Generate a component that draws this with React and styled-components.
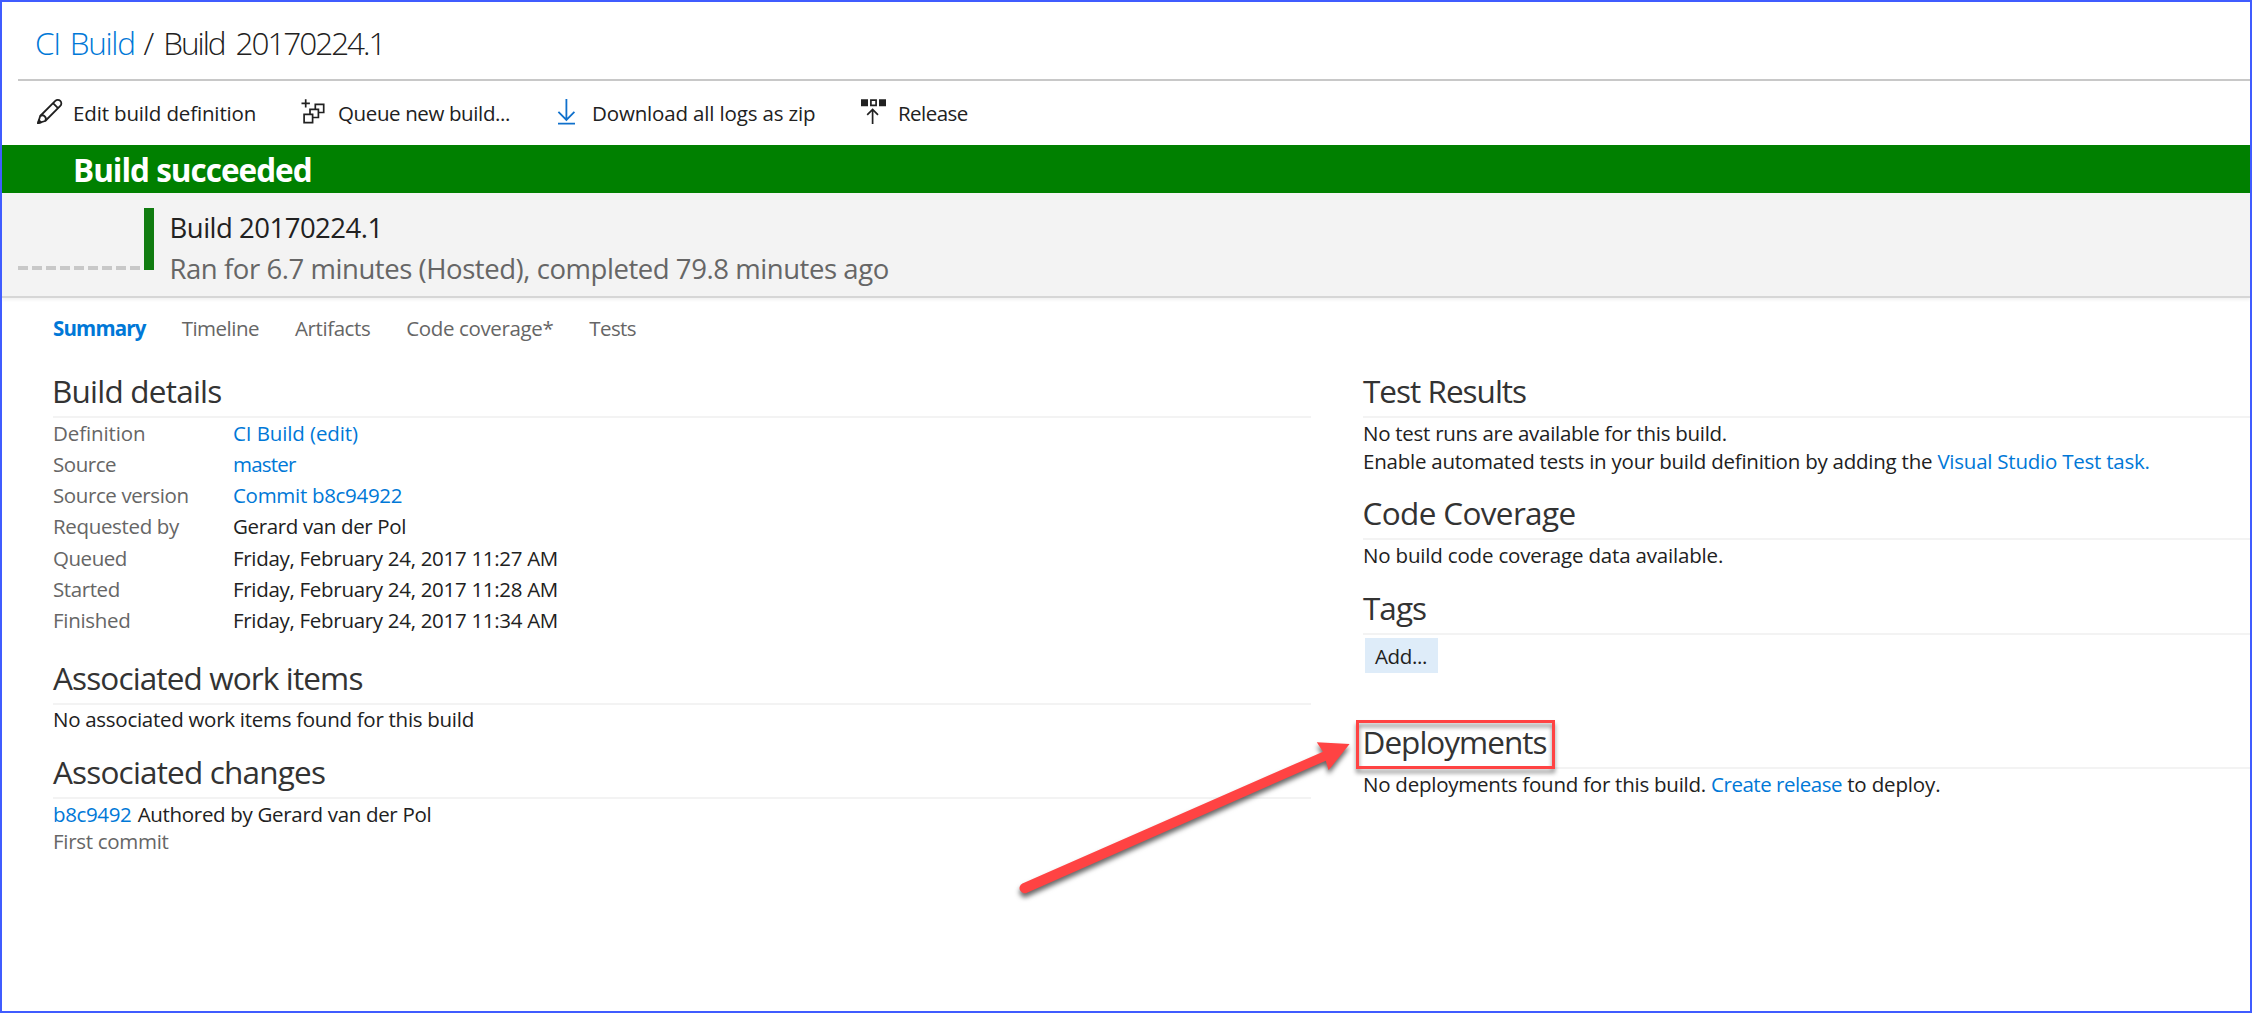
import React from "react";
import styled, { createGlobalStyle } from "styled-components";

const colors = {
  frame: "#405cff",
  link: "#0078d7",
  ink: "#212121",
  heading: "#333333",
  muted: "#666666",
  success: "#008000",
  annotation: "#ff4343",
};

const GlobalStyle = createGlobalStyle`
  * { box-sizing: border-box; }
  body {
    margin: 0;
    background: #fff;
    color: ${colors.ink};
    font-family: "Open Sans", "Noto Sans", sans-serif;
    font-size: 20.5px;
  }
`;

const Page = styled.div`
  position: relative;
  width: 2252px;
  height: 1013px;
  overflow: hidden;
  border: 2px solid ${colors.frame};
  display: flex;
  flex-direction: column;
`;

/* Inline run of text with its own tracking, in px. */
const Text = styled.span`
  letter-spacing: ${(p) => p.$track || 0}px;
  word-spacing: ${(p) => p.$space || 0}px;
  white-space: pre;
`;

const Link = styled(Text).attrs({ as: "a" })`
  color: ${colors.link};
  text-decoration: none;
  cursor: pointer;
`;

const Title = styled.h1`
  display: flex;
  flex: none;
  align-items: center;
  gap: 9px;
  height: 79px;
  margin: 0 0 0 16px;
  padding: 4px 0 0 17px;
  border-bottom: 2px solid #c8c8c8;
  font-size: 31.5px;
  font-weight: 300;
`;

const Toolbar = styled.div`
  display: flex;
  flex: none;
  height: 64px;
  align-items: center;
  padding-left: 34px;
`;

const ToolButton = styled.div`
  display: flex;
  align-items: center;
  width: ${(p) => p.$width}px;
  gap: ${(p) => p.$gap}px;
  line-height: 28px;

  svg {
    flex: none;
    margin-top: -4px;
  }
`;

const Banner = styled.div`
  flex: none;
  height: 48px;
  padding: 1px 0 0 71px;
  background: ${colors.success};
  color: #fff;
  font-size: 31.5px;
  font-weight: 700;
  line-height: 47px;
`;

const RunPanel = styled.div`
  display: flex;
  flex: none;
  height: 105px;
  padding: 14px 0 0 16px;
  background: #f3f3f3;
  border-bottom: 2px solid #d6d6d6;
  box-shadow: 0 2px 3px rgba(0, 0, 0, 0.06);
`;

const History = styled.div`
  display: flex;
  align-items: flex-end;
  width: 136px;
  height: 63px;
`;

const Dashes = styled.div`
  display: flex;
  gap: 4px;
  width: 126px;
`;

const Dash = styled.i`
  width: 10px;
  height: 4px;
  background: #c8c8c8;
`;

const HistoryBar = styled.div`
  width: 10px;
  height: 62px;
  background: #107c10;
`;

const RunInfo = styled.div`
  padding-left: 15.5px;
  font-size: 27.5px;
  line-height: 41px;
`;

const RunStatus = styled.div`
  color: ${colors.muted};
`;

const Tabs = styled.nav`
  display: flex;
  flex: none;
  gap: 36px;
  margin-top: 12px;
  padding-left: 51px;
  line-height: 36px;
  color: ${colors.muted};
`;

const Tab = styled(Text)`
  color: ${(p) => (p.$active ? colors.link : "inherit")};
  font-weight: ${(p) => (p.$active ? 700 : 400)};
`;

const Columns = styled.div`
  display: grid;
  grid-template-columns: 1258px 1fr;
  column-gap: 52px;
  padding: 24px 0 0 51px;
`;

const Section = styled.section`
  margin-bottom: ${(p) => p.$after}px;
`;

const Heading = styled.h2`
  margin: 0;
  height: 48px;
  border-bottom: 2px solid #f3f3f3;
  color: ${colors.heading};
  font-size: 31.5px;
  font-weight: 400;
  line-height: 42px;
`;

const HeadingText = styled(Text)`
  position: relative;
  margin-left: ${(p) => p.$shift || 0}px;
`;

const Body = styled.div`
  padding-top: ${(p) => p.$top || 0}px;
  line-height: 28px;
`;

const Muted = styled.div`
  color: ${colors.muted};
  line-height: 26px;
`;

const Details = styled.dl`
  display: grid;
  grid-template-columns: 180px 1fr;
  margin: -0.5px 0 0;
  line-height: 31.33px;
`;

const Label = styled.dt`
  color: ${colors.muted};
`;

const Value = styled.dd`
  margin: 0;
`;

const AddButton = styled.button`
  display: block;
  width: 73px;
  height: 35px;
  margin: 3px 0 0 2px;
  padding: 0 0 0 10px;
  border: 0;
  background: #deecf9;
  color: ${colors.ink};
  font: inherit;
  line-height: 36px;
  text-align: left;
`;

const Highlight = styled.span`
  position: absolute;
  left: -7px;
  top: -1px;
  width: 199px;
  height: 49px;
  border: 3px solid ${colors.annotation};
  filter: drop-shadow(0 4px 2px rgba(0, 0, 0, 0.45));
`;

const HeadingAnchor = styled.div`
  position: relative;
`;

const Arrow = styled.svg`
  position: absolute;
  left: 998px;
  top: 718px;
  overflow: visible;
  filter: drop-shadow(0 4px 2.5px rgba(0, 0, 0, 0.6));
`;

const PencilIcon = () => (
  <svg width="27" height="27" viewBox="0 0 27 27" fill="none" stroke="#212121" strokeWidth="1.8" strokeLinejoin="round">
    <path d="M2 25.2 4.2 18 19.3 2.9a3.5 3.5 0 0 1 5 5L9.2 23Z" />
    <path d="M4.2 18a3.6 3.6 0 0 1 5 5M17 5.2l5 5" />
    <path d="M2 25.2 2.9 22.2 5 24.3Z" fill="#212121" />
  </svg>
);

const QueueIcon = () => (
  <svg width="27" height="27" viewBox="0 0 27 27" fill="#fff" stroke="#212121" strokeWidth="1.7">
    <path d="M15.3 6.3h8.4v8.2h-8.4z" />
    <path d="M10 11.3h8.4v8.2H10z" />
    <path d="M4.1 16.4h8.5v8.2H4.1z" />
    <path d="M5.7 1.2v8.4M1.5 5.4h8.4" />
  </svg>
);

const DownloadIcon = () => (
  <svg width="27" height="27" viewBox="0 0 27 27" fill="none" stroke="#0f70cc" strokeWidth="1.8">
    <path d="M10.4 1v20.5M2.4 13.9l8 8 8-8M2 25.6h17" />
  </svg>
);

const ReleaseIcon = () => (
  <svg width="27" height="27" viewBox="0 0 27 27" fill="none" stroke="#212121" strokeWidth="1.7">
    <path d="M1 1.3h7v7H1zM19 1.3h7v7h-7z" fill="#212121" stroke="none" />
    <path d="M10.9 2.2h5.2v5.2h-5.2z" />
    <path d="M12.6 26V11.4M7.2 16.8l5.4-5.4 5.4 5.4" />
  </svg>
);

const details = [
  { label: "Definition", lt: -0.11, value: "CI Build (edit)", vt: -0.11, link: true },
  { label: "Source", lt: -0.47, value: "master", vt: -0.79, link: true },
  { label: "Source version", lt: -0.4, value: "Commit b8c94922", vt: -0.3, link: true },
  { label: "Requested by", lt: -0.34, value: "Gerard van der Pol", vt: -0.36 },
  { label: "Queued", lt: -0.45, value: "Friday, February 24, 2017 11:27 AM", vt: -0.3 },
  { label: "Started", lt: -0.4, value: "Friday, February 24, 2017 11:28 AM", vt: -0.3 },
  { label: "Finished", lt: -0.3, value: "Friday, February 24, 2017 11:34 AM", vt: -0.3 },
];

export default function App() {
  return (
    <Page>
      <GlobalStyle />
      <Title>
        <Link $track={-1.3} $space={3}>CI Build</Link>
        <Text>/</Text>
        <Text $track={-2.05} $space={5}>Build 20170224.1</Text>
      </Title>
      <Toolbar>
        <ToolButton $width={264} $gap={10}>
          <PencilIcon />
          <Text $track={-0.15}>Edit build definition</Text>
        </ToolButton>
        <ToolButton $width={256} $gap={11}>
          <QueueIcon />
          <Text $track={-0.38}>Queue new build...</Text>
        </ToolButton>
        <ToolButton $width={304} $gap={9}>
          <DownloadIcon />
          <Text $track={-0.15}>Download all logs as zip</Text>
        </ToolButton>
        <ToolButton $width={120} $gap={11}>
          <ReleaseIcon />
          <Text $track={-0.55}>Release</Text>
        </ToolButton>
      </Toolbar>
      <Banner>
        <Text $track={-1}>Build succeeded</Text>
      </Banner>
      <RunPanel>
        <History>
          <Dashes>
            {Array.from({ length: 9 }, (_, i) => (
              <Dash key={i} />
            ))}
          </Dashes>
          <HistoryBar />
        </History>
        <RunInfo>
          <div>
            <Text $track={-0.5}>Build 20170224.1</Text>
          </div>
          <RunStatus>
            <Text $track={-0.44}>Ran for 6.7 minutes (Hosted), completed 79.8 minutes ago</Text>
          </RunStatus>
        </RunInfo>
      </RunPanel>
      <Tabs>
        <Tab $active $track={-0.82}>Summary</Tab>
        <Tab $track={-0.5}>Timeline</Tab>
        <Tab $track={-0.42}>Artifacts</Tab>
        <Tab $track={-0.37}>Code coverage*</Tab>
        <Tab $track={-0.6}>Tests</Tab>
      </Tabs>
      <Columns>
        <div>
          <Section $after={20.2}>
            <Heading>
              <HeadingText $shift={-1} $track={-0.78}>Build details</HeadingText>
            </Heading>
            <Details>
              {details.map((d) => (
                <React.Fragment key={d.label}>
                  <Label>
                    <Text $track={d.lt}>{d.label}</Text>
                  </Label>
                  <Value>
                    {d.link ? <Link $track={d.vt}>{d.value}</Link> : <Text $track={d.vt}>{d.value}</Text>}
                  </Value>
                </React.Fragment>
              ))}
            </Details>
          </Section>
          <Section $after={18}>
            <Heading>
              <HeadingText $track={-0.87}>Associated work items</HeadingText>
            </Heading>
            <Body>
              <Text $track={-0.28}>No associated work items found for this build</Text>
            </Body>
          </Section>
          <Section $after={0}>
            <Heading>
              <HeadingText $track={-0.82}>Associated changes</HeadingText>
            </Heading>
            <Body $top={1}>
              <Link $track={-0.37}>b8c9492</Link>
              <Text $space={1}> </Text>
              <Text $track={-0.32}>Authored by Gerard van der Pol</Text>
              <Muted>
                <Text $track={-0.3}>First commit</Text>
              </Muted>
            </Body>
          </Section>
        </div>
        <div>
          <Section $after={17}>
            <Heading>
              <HeadingText $track={-1}>Test Results</HeadingText>
            </Heading>
            <Body $top={1}>
              <div>
                <Text $track={-0.27}>No test runs are available for this build.</Text>
              </div>
              <div>
                <Text $track={-0.235}>Enable automated tests in your build definition by adding the </Text>
                <Link $track={-0.24}>Visual Studio Test task.</Link>
              </div>
            </Body>
          </Section>
          <Section $after={18}>
            <Heading>
              <HeadingText $shift={-0.5} $track={-0.64}>Code Coverage</HeadingText>
            </Heading>
            <Body $top={1}>
              <Text $track={-0.18}>No build code coverage data available.</Text>
            </Body>
          </Section>
          <Section $after={48}>
            <Heading>
              <HeadingText $track={-0.98}>Tags</HeadingText>
            </Heading>
            <AddButton>
              <Text $track={-0.36}>Add...</Text>
            </AddButton>
          </Section>
          <Section $after={0}>
            <HeadingAnchor>
              <Highlight />
              <Heading>
                <HeadingText $shift={-0.5} $track={-0.98}>Deployments</HeadingText>
              </Heading>
            </HeadingAnchor>
            <Body $top={1}>
              <Text $track={-0.24}>No deployments found for this build. </Text>
              <Link $track={-0.48}>Create release</Link>
              <Text $track={-0.15}> to deploy.</Text>
            </Body>
          </Section>
        </div>
      </Columns>
      <Arrow width="360" height="190" viewBox="1000 720 360 190">
        <path
          d="M1022.4 883.4 1323 751.7 1316.8 742.2 1349.6 744 1328.6 770.2 1325.8 760.7 1027 892.7A5 5 0 0 1 1022.4 883.4Z"
          fill={colors.annotation}
        />
      </Arrow>
    </Page>
  );
}
